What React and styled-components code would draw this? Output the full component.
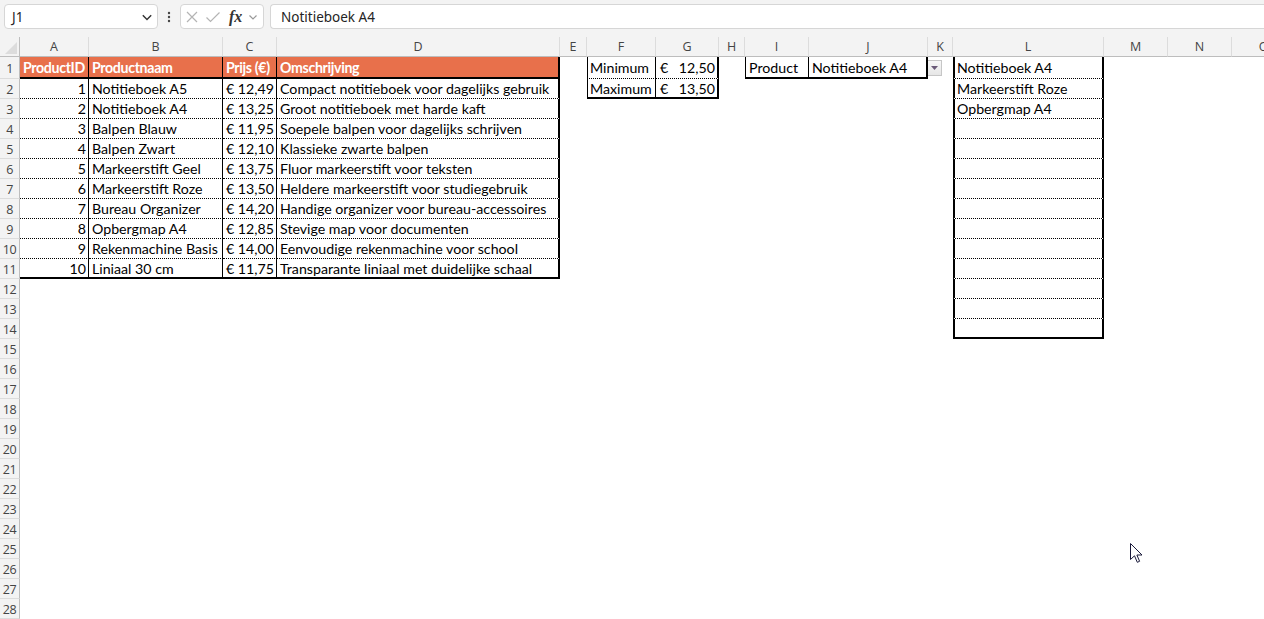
import React from 'react';
import styled, { createGlobalStyle } from 'styled-components';

const GlobalStyle = createGlobalStyle`
  html, body {
    margin: 0;
    padding: 0;
    background: #ffffff;
    overflow: hidden;
  }
  body {
    font-family: Lato, "Open Sans", sans-serif;
  }
`;

const COLS = [
  { name: 'A', w: 69 },
  { name: 'B', w: 134 },
  { name: 'C', w: 54 },
  { name: 'D', w: 283 },
  { name: 'E', w: 27 },
  { name: 'F', w: 69 },
  { name: 'G', w: 63 },
  { name: 'H', w: 26 },
  { name: 'I', w: 64 },
  { name: 'J', w: 119 },
  { name: 'K', w: 25 },
  { name: 'L', w: 151 },
  { name: 'M', w: 64 },
  { name: 'N', w: 64 },
  { name: 'O', w: 64 },
];
const ROW_COUNT = 28;

const products = [
  [1, 'Notitieboek A5', '€ 12,49', 'Compact notitieboek voor dagelijks gebruik'],
  [2, 'Notitieboek A4', '€ 13,25', 'Groot notitieboek met harde kaft'],
  [3, 'Balpen Blauw', '€ 11,95', 'Soepele balpen voor dagelijks schrijven'],
  [4, 'Balpen Zwart', '€ 12,10', 'Klassieke zwarte balpen'],
  [5, 'Markeerstift Geel', '€ 13,75', 'Fluor markeerstift voor teksten'],
  [6, 'Markeerstift Roze', '€ 13,50', 'Heldere markeerstift voor studiegebruik'],
  [7, 'Bureau Organizer', '€ 14,20', 'Handige organizer voor bureau-accessoires'],
  [8, 'Opbergmap A4', '€ 12,85', 'Stevige map voor documenten'],
  [9, 'Rekenmachine Basis', '€ 14,00', 'Eenvoudige rekenmachine voor school'],
  [10, 'Liniaal 30 cm', '€ 11,75', 'Transparante liniaal met duidelijke schaal'],
];

const filtered = ['Notitieboek A4', 'Markeerstift Roze', 'Opbergmap A4'];

const THIN = '1px solid #000';
const THICK = '2px solid #000';
const DOT = '1px dotted #000';

// ---------- formula bar ----------

const FormulaBar = styled.div`
  height: 37px;
  box-sizing: border-box;
  padding: 4px 0 0 4px;
  background: #f3f3f3;
  display: flex;
  align-items: flex-start;
`;

const NameBox = styled.div`
  width: 154px;
  height: 25px;
  box-sizing: border-box;
  background: #fff;
  border: 1px solid #d6d6d6;
  border-radius: 4px;
  display: flex;
  align-items: center;
  justify-content: space-between;
  padding: 0 4px 0 7px;
  font-family: "Noto Sans", sans-serif;
  font-size: 13.5px;
  color: #242424;
`;

const Dots = styled.div`
  width: 22px;
  height: 25px;
  display: flex;
  align-items: center;
  justify-content: center;
`;

const ActionBox = styled.div`
  width: 84px;
  height: 25px;
  box-sizing: border-box;
  background: #fff;
  border: 1px solid #d6d6d6;
  border-radius: 4px;
  display: flex;
  align-items: center;
  padding: 0 2px 0 4px;
  gap: 6px;
`;

const FxLabel = styled.span`
  font-family: "Liberation Serif", serif;
  font-style: italic;
  font-weight: bold;
  font-size: 16px;
  color: #333;
  margin-left: 2px;
`;

const FormulaInput = styled.div`
  flex: 1;
  margin-left: 6px;
  height: 25px;
  box-sizing: border-box;
  background: #fff;
  border: 1px solid #d6d6d6;
  border-right: none;
  border-radius: 4px 0 0 4px;
  display: flex;
  align-items: center;
  padding-left: 10px;
  font-family: "Noto Sans", sans-serif;
  font-size: 13.5px;
  color: #242424;
`;

const Chevron = ({ size = 10, color = '#444' }) => (
  <svg width={size} height={size} viewBox="0 0 10 10">
    <path d="M1.5 3.5 L5 7 L8.5 3.5" fill="none" stroke={color} strokeWidth="1.2" />
  </svg>
);

// ---------- sheet ----------

const Sheet = styled.div`
  display: grid;
  grid-template-columns: 20px ${COLS.map((c) => c.w + 'px').join(' ')};
  grid-template-rows: 20px 22px repeat(${ROW_COUNT - 1}, 20px);
  background: #fff;
`;

const Corner = styled.div`
  background: #f3f3f3;
  border-right: 1px solid #bdbdbd;
  border-bottom: 1px solid #bdbdbd;
  box-sizing: border-box;
  display: flex;
  align-items: flex-end;
  justify-content: flex-end;
  padding: 0 2px 2px 0;
`;

const ColHeader = styled.div`
  background: #f3f3f3;
  box-sizing: border-box;
  border-right: 1px solid #dcdcdc;
  border-bottom: 1px solid #bdbdbd;
  display: flex;
  align-items: center;
  justify-content: center;
  font-family: "Open Sans", sans-serif;
  font-size: 12.5px;
  color: #444;
  overflow: hidden;
`;

const RowHeader = styled.div`
  background: #f3f3f3;
  box-sizing: border-box;
  border-right: 1px solid #bdbdbd;
  border-bottom: 1px solid #dcdcdc;
  display: flex;
  align-items: center;
  justify-content: center;
  font-family: "Open Sans", sans-serif;
  font-size: 12.5px;
  letter-spacing: -0.4px;
  color: #444;
  padding-top: 1px;
`;

const Cell = styled.div`
  box-sizing: border-box;
  background: ${(p) => p.$bg || 'transparent'};
  border-right: ${(p) => p.$r || 'none'};
  border-bottom: ${(p) => p.$b || 'none'};
  border-left: ${(p) => p.$l || 'none'};
  display: flex;
  align-items: center;
  justify-content: ${(p) => p.$justify || 'flex-start'};
  padding: 0 ${(p) => p.$pr ?? 2}px 0 ${(p) => p.$pl ?? 3}px;
  font-family: Lato, "Open Sans", sans-serif;
  font-size: 14.2px;
  font-weight: ${(p) => (p.$bold ? 700 : 400)};
  letter-spacing: ${(p) => (p.$bold ? '-0.35px' : '0')};
  color: ${(p) => p.$color || '#000'};
  white-space: nowrap;
  overflow: hidden;
`;

const DropButton = styled.div`
  width: 16px;
  height: 16px;
  box-sizing: border-box;
  margin-left: -2px;
  border: 1px solid #c6c6c6;
  background: linear-gradient(#f7f7f7, #e6e6e6);
  display: flex;
  align-items: center;
  justify-content: center;
`;

const Cursor = styled.svg`
  position: absolute;
  left: 1130px;
  top: 543px;
  pointer-events: none;
`;

const Page = styled.div`
  position: relative;
  width: 1264px;
  height: 619px;
  overflow: hidden;
`;

function buildCells() {
  const grid = [];
  for (let r = 0; r < ROW_COUNT; r++) {
    grid.push(COLS.map(() => ({ content: null, props: {} })));
  }
  const set = (r, c, content, props) => {
    grid[r][c] = { content, props };
  };

  // product table A1:D11
  const heads = ['ProductID', 'Productnaam', 'Prijs (€)', 'Omschrijving'];
  heads.forEach((h, c) =>
    set(0, c, h, {
      $bg: '#e8704b',
      $color: '#fff',
      $bold: true,
      $r: c === 3 ? THICK : THIN,
      $b: THICK,
    })
  );
  products.forEach((p, i) => {
    const r = i + 1;
    const bottom = r === 10 ? THICK : DOT;
    set(r, 0, p[0], { $justify: 'flex-end', $r: THIN, $b: bottom });
    set(r, 1, p[1], { $r: THIN, $b: bottom });
    set(r, 2, p[2], { $justify: 'flex-end', $r: THIN, $b: bottom });
    set(r, 3, p[3], { $r: THICK, $b: bottom });
  });

  // min / max F1:G2
  [['Minimum', '12,50'], ['Maximum', '13,50']].forEach(([label, val], i) => {
    const bottom = i === 1 ? THICK : DOT;
    set(i, 5, label, { $l: THIN, $r: THIN, $b: bottom, $pl: 2 });
    set(
      i,
      6,
      <>
        <span>€</span>
        <span>{val}</span>
      </>,
      { $justify: 'space-between', $pl: 4, $pr: 2, $r: THICK, $b: bottom }
    );
  });

  // selector I1:J1 + dropdown in K1
  set(0, 8, 'Product', { $l: THIN, $r: THIN, $b: THICK });
  set(0, 9, 'Notitieboek A4', { $r: THICK, $b: THICK });
  set(
    0,
    10,
    <DropButton>
      <svg width="7" height="4" viewBox="0 0 7 4">
        <path d="M0 0 H7 L3.5 4 Z" fill="#6a5a78" />
      </svg>
    </DropButton>,
    { $pl: 0 }
  );

  // filter result L1:L14
  for (let r = 0; r < 14; r++) {
    set(r, 11, filtered[r] || '', { $l: THICK, $r: THICK, $b: r === 13 ? THICK : DOT, $pl: 2 });
  }
  return grid;
}

export default function App() {
  const cells = buildCells();
  return (
    <Page>
      <GlobalStyle />
      <FormulaBar>
        <NameBox>
          <span>J1</span>
          <Chevron size={12} color="#333" />
        </NameBox>
        <Dots>
          <svg width="4" height="14" viewBox="0 0 4 14">
            <circle cx="2" cy="3" r="1.2" fill="#444" />
            <circle cx="2" cy="7" r="1.2" fill="#444" />
            <circle cx="2" cy="11" r="1.2" fill="#444" />
          </svg>
        </Dots>
        <ActionBox>
          <svg width="14" height="14" viewBox="0 0 14 14">
            <path d="M2 2 L12 12 M12 2 L2 12" stroke="#b4b4b4" strokeWidth="1.2" />
          </svg>
          <svg width="16" height="14" viewBox="0 0 16 14">
            <path d="M1.5 7.5 L5.5 11.5 L14.5 2.5" fill="none" stroke="#b4b4b4" strokeWidth="1.2" />
          </svg>
          <FxLabel>fx</FxLabel>
          <Chevron size={10} color="#999" />
        </ActionBox>
        <FormulaInput>Notitieboek A4</FormulaInput>
      </FormulaBar>

      <Sheet>
        <Corner>
          <svg width="12" height="12" viewBox="0 0 12 12">
            <path d="M12 0 V12 H0 Z" fill="#dcdcdc" />
          </svg>
        </Corner>
        {COLS.map((c) => (
          <ColHeader key={c.name}>{c.name}</ColHeader>
        ))}
        {cells.map((row, r) => (
          <React.Fragment key={r}>
            <RowHeader>{r + 1}</RowHeader>
            {row.map((cell, c) => (
              <Cell key={c} {...cell.props}>
                {cell.content}
              </Cell>
            ))}
          </React.Fragment>
        ))}
      </Sheet>

      <Cursor width="14" height="22" viewBox="0 0 14 22">
        <path
          d="M0.5 0.5 V16.5 L4.5 12.8 L7.3 19.3 L9.6 18.3 L6.9 12 H12 Z"
          fill="#fff"
          stroke="#1a1a3a"
          strokeWidth="1"
          strokeLinejoin="round"
        />
      </Cursor>
    </Page>
  );
}
